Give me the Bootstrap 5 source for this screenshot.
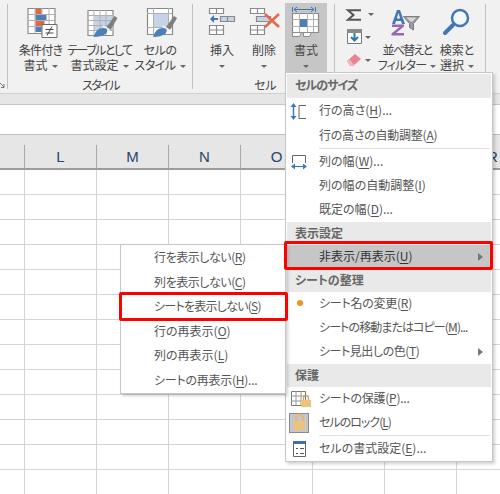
<!DOCTYPE html>
<html lang="ja"><head><meta charset="utf-8">
<link href="https://cdn.jsdelivr.net/npm/bootstrap@5.3.0/dist/css/bootstrap.min.css" rel="stylesheet">
<style>
html,body{margin:0;background:#fff}
.xl-page{width:500px;height:494px;overflow:hidden;position:relative;font-family:"Noto Sans CJK JP","Liberation Sans",sans-serif;font-size:12px;color:#444;font-feature-settings:"palt";letter-spacing:0}
.xl-ribbon{height:93px;flex:none;background:#f1f1f1;position:relative}
.xl-strip{height:12px;flex:none;background:#e6e6e6;border-top:1px solid #d0d0d0;border-bottom:1px solid #c6c6c6}
.xl-formula{height:30px;flex:none;background:#fff;border-bottom:1px solid #bdbdbd}
.xl-head{height:35px;flex:none;background:#e6e6e6;border-bottom:2px solid #9c9c9c;padding-left:24px;font-family:"Liberation Sans",sans-serif;font-size:15px;color:#26456b}
.xl-hcol{width:72px;flex:none;height:23px;margin-top:10px;line-height:23px;border-left:1px solid #a8a8a8;text-align:center}
.xl-grid{flex:1 1 auto;background-color:#fff;background-image:linear-gradient(#d4d4d4 1px,transparent 1px),linear-gradient(90deg,#d4d4d4 1px,transparent 1px);background-size:72px 25px;background-position:24px 24px}
.xl-rtool{position:absolute;top:0;display:flex;flex-direction:column;align-items:center;text-align:center;line-height:17px;color:#444;white-space:nowrap}
.xl-rtool span{height:14.5px;display:block}
.xl-rtool svg{display:block;height:37px;width:36px;margin:3px 0 1px;overflow:visible;flex:none}
.xl-car{display:inline-block;width:0;height:0;border:3px solid transparent;border-top:3px solid #666;border-bottom:0;vertical-align:2px;margin-left:4px}
.xl-car0{margin-left:0}
.xl-sep{position:absolute;top:4px;height:85px;width:1px;background:#c0c0c0}
.xl-gl{position:absolute;top:77px;line-height:15px;color:#444}
.xl-active{position:absolute;left:285px;top:3px;width:42px;height:69px;background:#c6c6c6}
.xl-overlay{position:absolute;left:0;top:0;width:500px;height:45px;pointer-events:none}
.xl-menu{position:absolute;background:#fff;border:1px solid #c6c6c6;box-shadow:2px 2px 3px rgba(0,0,0,.18)}
.xl-main{left:285px;top:72px;width:208px;height:390px;padding:1px}
.xl-sub{left:120px;top:244px;width:166px;height:150px}
.xl-mh{height:23px;line-height:21px;background:#e9e9e9;padding-left:8px;font-weight:700;color:#666}
.xl-mh-first{height:24px;margin-bottom:1px}
.xl-mi{height:24px;line-height:22px;padding-left:32px;color:#555;white-space:nowrap;position:relative}
.xl-mi-first{height:25px}
.xl-sub .xl-mi{height:24.6px;line-height:24px;padding-left:33px}
.xl-mi u{text-underline-offset:2px}
.xl-hov{background:#c6c6c6;color:#333}
.xl-div{height:1px;background:#e0e0e0;margin:0 1px 1px 32px}
.xl-ic{position:absolute;left:0;top:0;width:32px;height:24px;overflow:visible}
.xl-arr{position:absolute;right:8px;top:8px;width:0;height:0;border:4px solid transparent;border-left:5px solid #777;border-right:0}
.xl-red{position:absolute;border:3px solid #f00;border-radius:2px}
.xl-dot{position:absolute;left:10px;top:8px;width:6px;height:6px;border-radius:50%;background:#f5921e}
.xl-lockbg{position:absolute;left:2px;top:2px;width:20px;height:20px;background:#c6c6c6;border:1px solid #8a8a8a}
.xl-n1{letter-spacing:-.25px}.xl-n2{letter-spacing:-.45px}.xl-n3{letter-spacing:-.75px}.xl-n4{letter-spacing:-.9px}.xl-n5{letter-spacing:-1px}.xl-n6{letter-spacing:-1.5px}.xl-n7{letter-spacing:-1.75px}
</style></head><body>
<div class="xl-page d-flex flex-column">
<div class="xl-ribbon">
  <div class="xl-sep" style="left:7px"></div><div class="xl-sep" style="left:192px"></div><div class="xl-sep" style="left:334px"></div><div class="xl-sep" style="left:485px"></div>
  <svg class="position-absolute" style="left:0;top:82px" width="5" height="7" viewBox="0 0 5 7"><path fill="none" stroke="#777" d="M0 1l4 4M4 2v3.500H1"/></svg>
  <div class="xl-active"></div>
  <div class="xl-rtool" style="left:18px;width:45px">
    <svg viewBox="22.500 3 36 37"><path fill="#fff" stroke="#8a8a8a" stroke-width="1.200" d="M27.500 8.500h27v25h-27z"/><path stroke="#b0b0b0" fill="none" d="M27 14.500h28M27 20.500h28M27 26.500h28M34.500 8v25M41.500 8v25M48.500 8v25"/><path fill="#dd6a42" d="M35 9h6v5h-6z"/><path fill="#4a7fb8" d="M35 15h11v5H35z"/><path fill="#dd6a42" d="M35 21h9v5h-9z"/><path fill="#4a7fb8" d="M35 27h6v5h-6z"/><path fill="#fff" stroke="#6a6a6a" d="M41.500 24.500h15v13h-15z"/><path stroke="#444" fill="none" d="M45 29.500h8M45 33h8M51.500 26.500l-5 9"/></svg>
    <span class="xl-n3">条件付き</span><span>書式<i class="xl-car"></i></span></div>
  <div class="xl-rtool" style="left:66px;width:67px">
    <svg viewBox="81.500 3 36 37"><path fill="#fff" stroke="#8a8a8a" stroke-width="1.200" d="M87.500 10.500h25v25h-25z"/><path fill="#c4d4e6" d="M94 16h18v14H94z"/><path stroke="#b0b0b0" fill="none" d="M87 15.500h25M87 20.500h25M87 25.500h25M87 30.500h25M93.500 10v25M99.500 10v25M105.500 10v25"/><path fill="#7f7f7f" d="M106 27l8-11 3 2-7 12z"/><path fill="#f1f1f1" d="M103 25l3 2 4 3-2 2-6-5z"/><path fill="#4a7fb8" d="M93 37c2-6 5-9 10-9 4 0 5 3 2 6-3 2-7 3-12 3z"/></svg>
    <span class="xl-n6">テーブルとして</span><span>書式設定<i class="xl-car"></i></span></div>
  <div class="xl-rtool" style="left:135px;width:50px">
    <svg viewBox="142 3 36 37"><path fill="#fff" stroke="#8a8a8a" stroke-width="1.200" d="M147.500 8.500h25v26h-25z"/><path fill="#c4d4e6" d="M154 14h14v13h-14z"/><path stroke="#b0b0b0" fill="none" d="M147 13.500h25M147 27.500h25M153.500 8v26M168.500 8v19"/><path fill="#7f7f7f" d="M166 27l8-11 3 2-7 12z"/><path fill="#f1f1f1" d="M163 25l3 2 4 3-2 2-6-5z"/><path fill="#4a7fb8" d="M153 37c2-6 5-9 10-9 4 0 5 3 2 6-3 2-7 3-12 3z"/></svg>
    <span class="xl-n2">セルの</span><span class="xl-n2">スタイル<i class="xl-car"></i></span></div>
  <div class="xl-rtool" style="left:203px;width:38px">
    <svg viewBox="204 3 36 37"><path fill="#fff" stroke="#8a8a8a" stroke-width="1.200" d="M209.500 8.500h14v5h-14zM216.500 8.500v5M209.500 25.500h14v9h-14zM216.500 25.500v9M209.500 30h14"/><path fill="#c4d4e6" stroke="#8a8a8a" stroke-width="1.200" d="M220.500 16.500h14v5h-14zM227.500 16.500v5"/><path stroke="#3f78b4" stroke-width="2" fill="none" d="M212 19h6"/><path fill="#3f78b4" d="M214 15v8l-4-4z"/></svg>
    <span>挿入</span><span><i class="xl-car xl-car0"></i></span></div>
  <div class="xl-rtool" style="left:247px;width:34px">
    <svg viewBox="246 3 36 37"><path fill="#fff" stroke="#8a8a8a" stroke-width="1.200" d="M250.500 8.500h14v5h-14zM257.500 8.500v5M250.500 25.500h14v9h-14zM257.500 25.500v9M250.500 30h14"/><path fill="#c4d4e6" stroke="#8a8a8a" stroke-width="1.200" d="M256.500 16.500h14v5h-14z"/><path stroke="#e2694a" stroke-width="2.500" fill="none" d="M265 14l14 13M279 14l-14 13"/></svg>
    <span>削除</span><span><i class="xl-car xl-car0"></i></span></div>
  <div class="xl-rtool" style="left:285px;width:42px">
    <svg viewBox="288 3 36 37"><path stroke="#3f78b4" fill="none" d="M292.500 7v5M315.500 7v5M294 9.500h20M297 7l-3 2.500 3 2.500M311 7l3 2.500-3 2.500"/><path fill="#fff" stroke="#8a8a8a" stroke-width="1.200" d="M292.500 13.500h26v19h-26z"/><path stroke="#b0b0b0" fill="none" d="M292 19.500h26M292 26.500h26M299.500 13v19M307.500 13v19M313.500 13v19"/><path fill="#4a7fb8" d="M300 19h7v8h-7z"/><path fill="#fff" stroke="#8a8a8a" d="M292.500 32.500h9l-2 4h-7zM303.500 32.500h8l-2 4h-6z"/></svg>
    <span>書式</span><span><i class="xl-car xl-car0"></i></span></div>
  <svg class="xl-overlay" viewBox="0 0 500 45" aria-hidden="true">
    <path fill="none" stroke="#555" stroke-width="2" d="M361 10.200h-13l5.500 4.800-5.500 4.800h13"/><path fill="#666" d="M368 13h6l-3 3z"/>
    <path fill="#fff" stroke="#7a7a7a" d="M347.500 29.500h14v14h-14z"/><path fill="#8a8a8a" d="M347 29h15v4h-15z"/><path stroke="#2e75b6" stroke-width="2" fill="none" d="M354.500 33v8M351 37l3.500 3.500L358 37"/><path fill="#666" d="M365 36h6l-3 3z"/>
    <path fill="#3f78b4" d="M397 10h3l5 14h-3l-1-3h-5l-1 3h-3zM398.500 13l-1.700 5.500h3.400z"/><path fill="#9468b8" d="M392 24.500h12v2l-8 6.500h8v2.500h-12.500v-2l8-6.500H392z"/>
    <path fill="#9a9a9a" stroke="#7f7f7f" d="M403.500 16.500h16l-6 7v6.500l-4-2.500V23.500z"/><path fill="#d8d8d8" d="M406.500 17.500h10l-4 4h-2z"/>
    <circle cx="460" cy="18" r="8" fill="#f4f8fc" stroke="#3f78b4" stroke-width="2.500"/><path stroke="#3f78b4" stroke-width="4" stroke-linecap="round" d="M453 25l-8 8"/>
  </svg>
  <svg class="position-absolute" style="left:345px;top:50px" width="30" height="20" viewBox="0 0 30 20"><path fill="#e8848f" d="M2 11l8-7 6 5-8 7H5z"/><path fill="#f4b9bf" d="M5 16l-3-5 2-2 5 6z"/><path fill="#666" d="M20 9h6l-3 3z"/></svg>
  <div class="xl-rtool" style="left:374px;width:66px;top:41px"><span class="xl-n7">並べ替えと</span><span class="xl-n3">フィルター<i class="xl-car"></i></span></div>
  <div class="xl-rtool" style="left:436px;width:42px;top:41px"><span>検索と</span><span>選択<i class="xl-car"></i></span></div>
  <div class="xl-gl xl-n6" style="left:82px">スタイル</div><div class="xl-gl" style="left:254px">セル</div>
</div>
<div class="xl-strip"></div>
<div class="xl-formula"></div>
<div class="xl-head d-flex">
  <div class="xl-hcol">L</div><div class="xl-hcol">M</div><div class="xl-hcol">N</div><div class="xl-hcol">O</div><div class="xl-hcol"></div><div class="xl-hcol"></div><div class="xl-hcol">R</div>
</div>
<div class="xl-grid"></div>

<div class="xl-menu xl-main">
  <div class="xl-mh xl-mh-first xl-n5">セルのサイズ</div>
  <div class="xl-mi xl-mi-first"><svg class="xl-ic" viewBox="287 98 32 24"><path stroke="#3f78b4" stroke-width="1.500" fill="none" d="M293.500 105v11"/><path fill="#3f78b4" d="M293.500 102l3 4h-6zM293.500 119l3-4h-6z"/><path stroke="#666" fill="none" d="M306 104.500h-7v13h7"/></svg>行の高さ(<u>H</u>)...</div>
  <div class="xl-mi xl-n1">行の高さの自動調整(<u>A</u>)</div>
  <div class="xl-div"></div>
  <div class="xl-mi"><svg class="xl-ic" viewBox="287 149 32 24"><path stroke="#666" fill="none" d="M292.500 162v-7.500h13v7.500"/><path stroke="#3f78b4" stroke-width="1.200" fill="none" d="M293 165.500h12"/><path fill="#3f78b4" d="M291 165.500l4-3v6zM307 165.500l-4-3v6z"/></svg>列の幅(<u>W</u>)...</div>
  <div class="xl-mi">列の幅の自動調整(<u>I</u>)</div>
  <div class="xl-mi">既定の幅(<u>D</u>)...</div>
  <div class="xl-mh">表示設定</div>
  <div class="xl-mi xl-hov">非表示/再表示(<u>U</u>)<span class="xl-arr"></span></div>
  <div class="xl-mh">シートの整理</div>
  <div class="xl-mi xl-n1"><span class="xl-dot"></span>シート名の変更(<u>R</u>)</div>
  <div class="xl-mi xl-n4">シートの移動またはコピー(<u>M</u>)...</div>
  <div class="xl-mi xl-n2">シート見出しの色(<u>T</u>)<span class="xl-arr"></span></div>
  <div class="xl-mh">保護</div>
  <div class="xl-mi xl-n1"><svg class="xl-ic" viewBox="287 386 32 24"><path fill="#fff" stroke="#777" d="M291.500 390.500h14v14h-14z"/><path stroke="#999" fill="none" d="M291 395h14M291 400h14M296 390v14M301 390v14"/><rect x="301" y="399" width="10" height="7" fill="#eec27d"/><path stroke="#c9a269" fill="none" stroke-width="1.300" d="M303.500 399v-2a2.500 2.500 0 0 1 5 0v2"/></svg>シートの保護(<u>P</u>)...</div>
  <div class="xl-mi xl-n5"><span class="xl-lockbg"></span><svg class="xl-ic" viewBox="287 410 32 24"><rect x="294" y="420" width="11" height="9" fill="#eec27d"/><path stroke="#e0b878" fill="none" stroke-width="2" d="M296 420v-3a3.500 3.500 0 0 1 7 0v3"/></svg>セルのロック(<u>L</u>)</div>
  <div class="xl-div"></div>
  <div class="xl-mi"><svg class="xl-ic" viewBox="287 436 32 24"><path fill="#fff" stroke="#666" d="M293.500 440.500h12v15h-12z"/><path fill="#3f6fa8" d="M293 440h13v3h-13z"/><path stroke="#555" fill="none" d="M296 447.500h2M300 447.500h4M296 452.500h2M300 452.500h4"/></svg>セルの書式設定(<u>E</u>)...</div>
</div>
<div class="xl-menu xl-sub">
  <div class="xl-mi xl-n2">行を表示しない(<u>R</u>)</div>
  <div class="xl-mi xl-n2">列を表示しない(<u>C</u>)</div>
  <div class="xl-mi xl-n3">シートを表示しない(<u>S</u>)</div>
  <div class="xl-mi">行の再表示(<u>O</u>)</div>
  <div class="xl-mi">列の再表示(<u>L</u>)</div>
  <div class="xl-mi xl-n1">シートの再表示(<u>H</u>)...</div>
</div>
<div class="xl-red" style="left:284px;top:241px;width:209px;height:29px"></div>
<div class="xl-red" style="left:119px;top:292px;width:169px;height:29px"></div>
</div>
<script src="https://cdn.jsdelivr.net/npm/bootstrap@5.3.0/dist/js/bootstrap.bundle.min.js"></script>
</body></html>
